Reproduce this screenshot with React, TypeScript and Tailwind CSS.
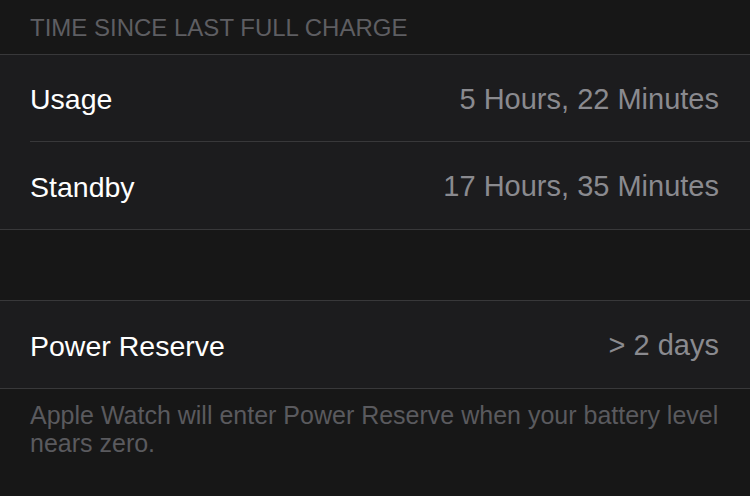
import React from "react";

const font = { fontFamily: '"Liberation Sans", Arial, sans-serif' };

function Row({ label, value, last }: { label: string; value: string; last?: boolean }) {
  return (
    <div className="bg-[#1c1c1e] pl-[30px]">
      <div
        className={
          "flex h-[87px] items-center justify-between pr-[31px] pt-[3px] " +
          (last ? "" : "border-b border-[#38383a]")
        }
      >
        <span className="text-[28.5px] text-white">{label}</span>
        <span className="text-[29px] text-[#8a8a8f]">{value}</span>
      </div>
    </div>
  );
}

export default function App() {
  return (
    <div className="h-[496px] w-[750px] overflow-hidden bg-[#171717]" style={font}>
      <div className="flex h-[54px] items-start px-[30px] pt-[13px]">
        <span className="text-[24px] leading-[30px] text-[#5e5e62]">TIME SINCE LAST FULL CHARGE</span>
      </div>
      <div className="border-y border-[#38383a]">
        <Row label="Usage" value="5 Hours, 22 Minutes" />
        <Row label="Standby" value="17 Hours, 35 Minutes" last />
      </div>
      <div className="h-[70px]" />
      <div className="border-y border-[#38383a]">
        <Row label="Power Reserve" value="> 2 days" last />
      </div>
      <div className="pl-[30px] pr-[28px] pt-[12px] text-[25px] leading-[28px] text-[#5a5a5e]">
        Apple Watch will enter Power Reserve when your battery level nears zero.
      </div>
    </div>
  );
}
